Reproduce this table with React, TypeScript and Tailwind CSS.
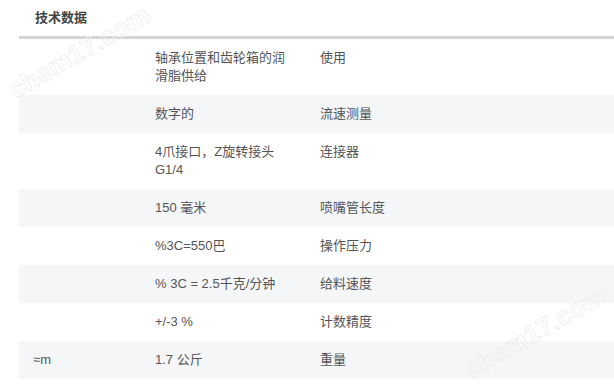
import React from "react";

const rows: [string, string, string][] = [
  ["", "轴承位置和齿轮箱的润滑脂供给", "使用"],
  ["", "数字的", "流速测量"],
  ["", "4爪接口，Z旋转接头 G1/4", "连接器"],
  ["", "150 毫米", "喷嘴管长度"],
  ["", "%3C=550巴", "操作压力"],
  ["", "% 3C = 2.5千克/分钟", "给料速度"],
  ["", "+/-3 %", "计数精度"],
  ["≈m", "1.7 公斤", "重量"],
];

export default function App() {
  return (
    <div
      className="relative w-[614px] h-[387px] bg-white overflow-hidden"
      style={{ fontFamily: '"Liberation Sans", "Noto Sans CJK SC", sans-serif' }}
    >
      <div className="h-[36px] pl-[35px] flex items-center text-[13px] font-bold text-[#444]">
        技术数据
      </div>
      <div className="ml-[19px] border-t-[3px] border-[#d1d5da]">
        {rows.map((r, i) => (
          <div
            key={i}
            className={`grid grid-cols-[122px_165px_1fr] text-[13px] leading-[18px] text-[#555] ${
              i % 2 === 1 ? "bg-[#f5f6f8]" : "bg-white"
            }`}
          >
            <div className="px-[14px] py-[10px]">{r[0]}</div>
            <div className="px-[14px] py-[10px]">{r[1]}</div>
            <div className="px-[14px] py-[10px]">{r[2]}</div>
          </div>
        ))}
      </div>
      <div className="pointer-events-none absolute left-[-6px] top-[36px] w-[170px] leading-[32px] text-center text-[26px] font-bold text-transparent [-webkit-text-stroke:0.8px_#eeeeee] -rotate-[30deg]">
        chem17.com
      </div>
      <div className="pointer-events-none absolute left-[450px] top-[316px] w-[170px] leading-[32px] text-center text-[26px] font-bold text-transparent [-webkit-text-stroke:0.8px_#eeeeee] -rotate-[30deg]">
        chem17.com
      </div>
    </div>
  );
}
